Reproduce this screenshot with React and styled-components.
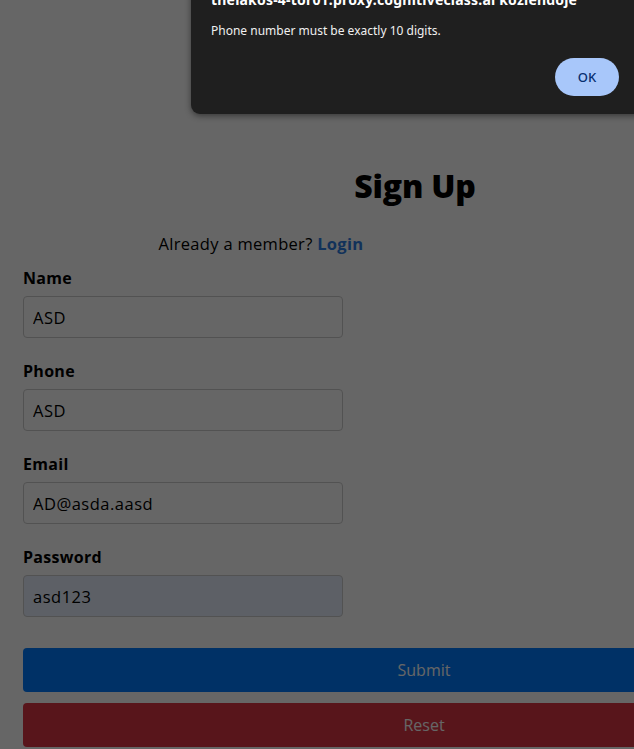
import React from "react";
import styled, { createGlobalStyle } from "styled-components";

const Global = createGlobalStyle`
  html, body { margin: 0; padding: 0; background: #ffffff; overflow: hidden; }
  body { font-family: "Open Sans", "Noto Sans", sans-serif; }
  * { box-sizing: border-box; }
`;

const Page = styled.div`
  position: relative;
  width: 634px;
  height: 749px;
  overflow: hidden;
  background: #ffffff;
`;

const Container = styled.div`
  width: 784px;
  margin-left: 23px;
  padding-top: 164px;
  display: flex;
  flex-direction: column;
`;

const Title = styled.h1`
  margin: 0;
  text-align: center;
  font-family: "Open Sans", sans-serif;
  font-weight: 800;
  font-size: 32px;
  line-height: 44px;
  color: #000;
  letter-spacing: -0.2px;
`;

const Member = styled.p`
  width: 476px;
  margin: 24px 0 0;
  text-align: center;
  font-size: 16.5px;
  letter-spacing: 0.3px;
  line-height: 24px;
  color: #000;
`;

const LoginLink = styled.a`
  font-weight: 700;
  color: #2f7de1;
  text-decoration: none;
`;

const Form = styled.form`
  display: flex;
  flex-direction: column;
  margin-top: 10px;
`;

const Field = styled.div`
  display: flex;
  flex-direction: column;
  gap: 6px;
  margin-bottom: 21px;
`;

const Label = styled.label`
  font-weight: 700;
  font-size: 16px;
  letter-spacing: 0.3px;
  line-height: 24px;
  color: #000;
`;

const Input = styled.input`
  width: 320px;
  height: 42px;
  padding: 0 9px;
  border: 1px solid #cccccc;
  border-radius: 4px;
  font-family: "Open Sans", sans-serif;
  font-size: 16.5px;
  letter-spacing: 0.5px;
  color: #000;
  background: ${(p) => (p.$autofill ? "#e8f0fe" : "#ffffff")};
  outline: none;
`;

const Buttons = styled.div`
  width: 802px;
  display: flex;
  flex-direction: column;
  gap: 11px;
  margin-top: 10px;
`;

const Button = styled.button`
  width: 100%;
  height: 44px;
  border: none;
  border-radius: 4px;
  background: ${(p) => (p.$variant === "reset" ? "#dc3545" : "#007bff")};
  color: #ffffff;
  font-family: "Open Sans", sans-serif;
  font-size: 16px;
`;

const Overlay = styled.div`
  position: absolute;
  inset: 0;
  background: rgba(0, 0, 0, 0.6);
`;

const Dialog = styled.div`
  position: absolute;
  left: 191px;
  top: -26px;
  width: 470px;
  height: 140px;
  background: #1f1f1f;
  border-radius: 9px;
  box-shadow: 0 2px 6px rgba(0, 0, 0, 0.45);
  padding: 17px 20px 0 20px;
  font-family: "Noto Sans", "Open Sans", sans-serif;
  color: #ffffff;
  display: flex;
  flex-direction: column;
`;

const DialogTitle = styled.div`
  font-weight: 700;
  font-size: 14px;
  letter-spacing: 0.2px;
  line-height: 18px;
  white-space: nowrap;
`;

const DialogMessage = styled.div`
  margin-top: 14px;
  font-size: 12px;
  line-height: 16px;
  color: #f0f0f0;
`;

const DialogActions = styled.div`
  display: flex;
  justify-content: flex-end;
  padding-right: 22px;
  margin-top: 19px;
`;

const OkButton = styled.button`
  width: 64px;
  height: 38px;
  border: none;
  border-radius: 19px;
  background: #a8c7fa;
  color: #062e6f;
  font-family: "Noto Sans", sans-serif;
  font-size: 13px;
  font-weight: 500;
`;

const fields = [
  { label: "Name", value: "ASD" },
  { label: "Phone", value: "ASD" },
  { label: "Email", value: "AD@asda.aasd" },
  { label: "Password", value: "asd123", autofill: true },
];

export default function App() {
  return (
    <Page>
      <Global />
      <Container>
        <Title>Sign Up</Title>
        <Member>
          Already a member? <LoginLink href="#">Login</LoginLink>
        </Member>
        <Form onSubmit={(e) => e.preventDefault()}>
          {fields.map((f) => (
            <Field key={f.label}>
              <Label>{f.label}</Label>
              <Input defaultValue={f.value} $autofill={f.autofill} readOnly />
            </Field>
          ))}
          <Buttons>
            <Button type="submit">Submit</Button>
            <Button type="reset" $variant="reset">Reset</Button>
          </Buttons>
        </Form>
      </Container>
      <Overlay />
      <Dialog>
        <DialogTitle>theiakos-4-tor01.proxy.cognitiveclass.ai közlendője</DialogTitle>
        <DialogMessage>Phone number must be exactly 10 digits.</DialogMessage>
        <DialogActions>
          <OkButton>OK</OkButton>
        </DialogActions>
      </Dialog>
    </Page>
  );
}
